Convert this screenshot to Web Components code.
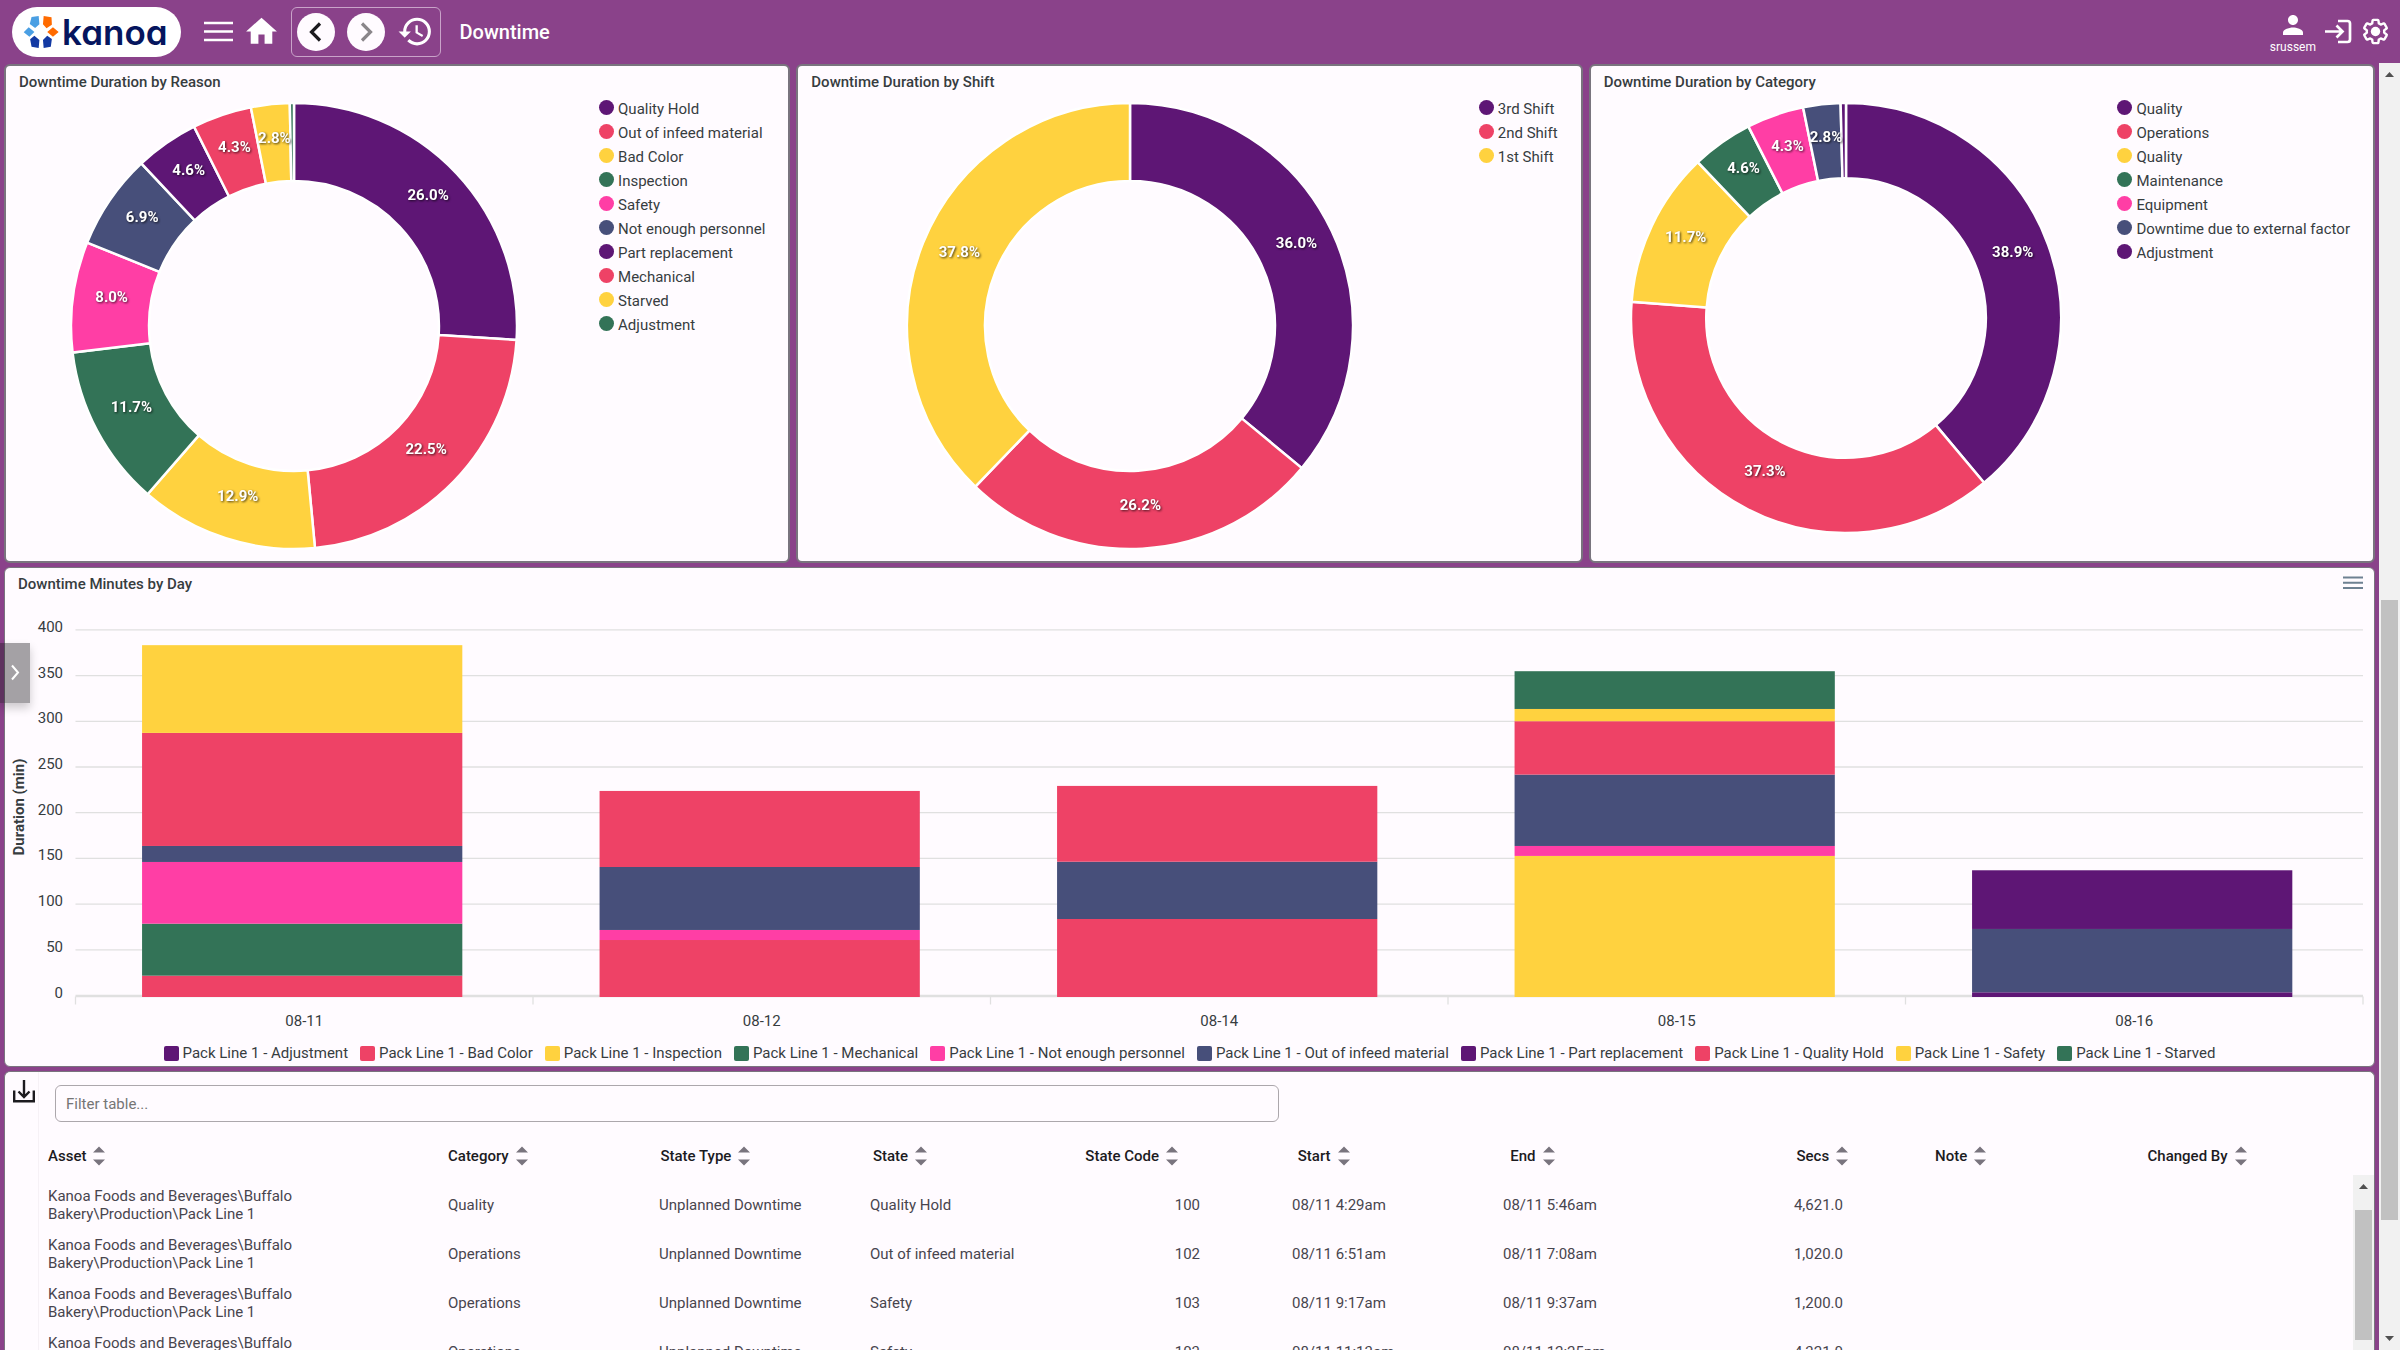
<!DOCTYPE html>
<html lang="en">
<head>
<meta charset="utf-8">
<title>Downtime</title>
<style>
  html, body { margin: 0; height: 100%; }
  body {
    --brand: #8a428a; --surface: #fffbff; --outline: #79747e; --ink: #373d3f;
    font-family: Roboto, "Liberation Sans", sans-serif; font-size: 15px; line-height: 18px;
    color: var(--ink); background: var(--brand); overflow: hidden;
  }
</style>
</head>
<body>
<downtime-app></downtime-app>

<script>
const COLORS = { purple: '#5e1675', red: '#ee4266', yellow: '#ffd23f', green: '#337357', pink: '#ff3ea5', blue: '#474f7a' };
const CYCLE = Object.values(COLORS);

class Base extends HTMLElement {
  mount(html) {
    if (!this.shadowRoot) this.attachShadow({ mode: 'open' });
    this.shadowRoot.innerHTML = html;
  }
}

class TopBar extends Base {
  connectedCallback() {
    this.mount(`
<style>
  :host { display: flex; align-items: center; height: 63px; padding: 0 10px 0 12px; box-sizing: border-box; color: #fff; }
  svg { display: block; }
  button, a { all: unset; cursor: pointer; display: flex; align-items: center; justify-content: center; }
  .logo { display: flex; align-items: center; gap: 3px; height: 50px; padding: 0 13px 0 11px; border-radius: 25px; background: #fff;
    font: 600 35px/44px Inter, sans-serif; font-feature-settings: "cv11"; color: #05155e; }
  .menu { margin-left: 23px; }
  .home { margin-left: 10px; }
  .history { display: flex; align-items: center; gap: 12px; margin-left: 11px; height: 48px; padding: 0 6px 0 5px; border: 1px solid #c9a3c9; border-radius: 6px; }
  .round { width: 38px; height: 38px; border-radius: 50%; background: var(--surface); color: #1c1b1f; }
  .round[disabled] { color: #8a868a; }
  h1 { margin: 0 auto 0 19px; font-size: 20px; line-height: 24px; font-weight: 500; }
  .right { display: flex; align-items: center; gap: 9px; }
  .user { flex-direction: column; font-size: 12px; line-height: 14px; }
</style>
<a class="logo" href="#">
  <svg width="36" height="32" viewBox="66 42 101 96" preserveAspectRatio="none" aria-hidden="true">
    <path fill="#4a9fe3" d="M90 45L110 42 112 67 100 78 85 66zM68 91L82 76 98 90 84 104z"/>
    <path fill="#ff6b00" d="M124 42L146 46 147 68 132 79 122 67zM134 90L150 76 166 90 150 104z"/>
    <path fill="#1239a3" d="M134 101L147 111 144 134 124 138 122 114zM98 101L112 114 110 138 90 134 86 112z"/>
  </svg><span>kanoa</span></a>
<button class="menu" aria-label="Menu"><svg width="29" height="21"><path d="M0 2h29M0 10.500h29M0 19h29" stroke="#fff" stroke-width="2.600"/></svg></button>
<a class="home" href="#" aria-label="Home"><svg width="37" height="37" viewBox="0 0 24 24" fill="#fff"><path d="M10 20v-6h4v6h5v-8h3L12 3 2 12h3v8z"/></svg></a>
<div class="history">
  <button class="round" aria-label="Back"><svg width="38" height="38" fill="none" stroke="currentColor" stroke-width="3.200"><path d="M23 10.500L14.500 19l8.500 8.500"/></svg></button>
  <button class="round" disabled aria-label="Forward"><svg width="38" height="38" fill="none" stroke="currentColor" stroke-width="3.200"><path d="M15 10.500l8.500 8.500-8.500 8.500"/></svg></button>
  <button aria-label="History"><svg width="37" height="37" viewBox="0 0 24 24" fill="#fff"><path d="M13 3a9 9 0 0 0-9 9H1l3.890 3.890.07.14L9 12H6c0-3.870 3.130-7 7-7s7 3.130 7 7-3.130 7-7 7c-1.930 0-3.680-.79-4.940-2.060l-1.420 1.420A8.950 8.950 0 0 0 13 21a9 9 0 0 0 0-18zm-1 5v5l4.280 2.540.72-1.210-3.500-2.080V8z"/></svg></button>
</div>
<h1>Downtime</h1>
<div class="right">
  <button class="user"><svg width="30" height="30" viewBox="0 0 24 24" fill="#fff"><path d="M12 12c2.210 0 4-1.790 4-4s-1.790-4-4-4-4 1.790-4 4 1.790 4 4 4zm0 2c-2.670 0-8 1.340-8 4v2h16v-2c0-2.660-5.330-4-8-4z"/></svg><span>srussem</span></button>
  <button aria-label="Log in"><svg width="27" height="25" fill="none" stroke="#fff" stroke-width="2.700"><path d="M13 2h9.500q2.500 0 2.500 2.500v16q0 2.500-2.500 2.500H13M0 12.500h17M11.500 6.500l6 6-6 6"/></svg></button>
  <button aria-label="Settings"><svg width="29" height="29" viewBox="0 0 24 24" fill="none" stroke="#fff" stroke-width="2" stroke-linejoin="round"><path d="M19.140 12.940c.04-.3.06-.61.06-.94 0-.32-.02-.64-.07-.94l2.030-1.580c.18-.14.23-.41.12-.61l-1.920-3.320c-.12-.22-.37-.29-.59-.22l-2.390.96c-.5-.38-1.030-.7-1.620-.94l-.36-2.540c-.04-.24-.24-.41-.48-.41h-3.840c-.24 0-.43.17-.47.41l-.36 2.540c-.59.24-1.130.57-1.620.94l-2.390-.96c-.22-.08-.47 0-.59.22L2.740 8.870c-.12.21-.08.47.12.61l2.030 1.580c-.05.3-.09.63-.09.94s.02.64.07.94l-2.030 1.580c-.18.14-.23.41-.12.61l1.920 3.320c.12.22.37.29.59.22l2.390-.96c.5.38 1.030.7 1.620.94l.36 2.540c.05.24.24.41.48.41h3.840c.24 0 .44-.17.47-.41l.36-2.540c.59-.24 1.130-.56 1.620-.94l2.390.96c.22.08.47 0 .59-.22l1.920-3.320c.12-.22.07-.47-.12-.61z"/><circle cx="12" cy="12" r="3.900" fill="#fff" stroke="none"/></svg></button>
</div>`);
  }
}

class DashCard extends Base {
  connectedCallback() {
    const heading = this.getAttribute('heading');
    this.mount(`
<style>
  :host { display: flex; flex-direction: column; box-sizing: border-box; min-width: 0; background: var(--surface);
    border: var(--card-border, 1px) solid var(--outline); border-radius: 6px; overflow: hidden; }
  header { display: flex; justify-content: space-between; padding: 7px 11px 0 13px; }
  h2 { margin: 0; font-size: 15px; line-height: 18px; font-weight: 500; }
</style>
${heading ? `<header><h2>${heading}</h2><slot name="action"></slot></header>` : ''}
<slot></slot>`);
  }
}

class ChartLegend extends Base {
  connectedCallback() {
    const names = this.getAttribute('items').split('|');
    this.mount(`
<style>
  :host { display: block; }
  ul { margin: 0; padding: 0; list-style: none; display: flex; flex-wrap: wrap; }
  li { display: flex; align-items: center; gap: 4px; line-height: 24px; white-space: nowrap; }
  i { width: 15px; height: 15px; border-radius: 2px; }
  :host([vertical]) ul { flex-direction: column; }
  :host([vertical]) i { border-radius: 50%; margin-bottom: 4px; }
  :host(:not([vertical])) ul { justify-content: center; column-gap: 12px; }
</style>
<ul>${names.map((n, k) => `<li><i style="background:${CYCLE[k % 6]}"></i>${n}</li>`).join('')}</ul>`);
  }
}

class DonutChart extends Base {
  connectedCallback() {
    this.mount(`
<style>
  :host { display: flex; min-height: 464px; padding-top: 6px; }
  .plot { flex: 1; min-width: 0; padding-top: 5px; display: flex; justify-content: center; }
  chart-legend { padding: 0 23px 0 17px; }
  svg { display: block; }
  text { font-size: 15px; font-weight: 700; fill: #fff; text-anchor: middle; filter: drop-shadow(1px 1px 1px rgba(0,0,0,.7)); }
</style>
<div class="plot"></div>
<chart-legend vertical items="${this.getAttribute('items')}"></chart-legend>`);
    this.plot = this.shadowRoot.querySelector('.plot');
    this.draw();
    new ResizeObserver(() => this.draw()).observe(this.plot);
  }
  draw() {
    const w = this.plot.clientWidth;
    if (!w || w === this.drawn) return;
    this.drawn = w;
    const R = Math.min(223, (w - 80) / 2), r = R * 0.65, c = R + 1, mid = (R + r) / 2;
    const values = this.getAttribute('values').split(',').map(Number);
    const total = values.reduce((a, b) => a + b, 0);
    const at = (rad, t) => `${(c + rad * Math.sin(t)).toFixed(2)} ${(c - rad * Math.cos(t)).toFixed(2)}`;
    let a = 0, arcs = '', labels = '';
    values.forEach((v, k) => {
      const b = a + v / total * 2 * Math.PI, big = b - a > Math.PI ? 1 : 0, m = (a + b) / 2;
      arcs += `<path fill="${CYCLE[k % 6]}" d="M${at(R, a)}A${R} ${R} 0 ${big} 1 ${at(R, b)}L${at(r, b)}A${r} ${r} 0 ${big} 0 ${at(r, a)}z"/>`;
      if (v > 1) labels += `<text x="${c + mid * Math.sin(m)}" y="${c - mid * Math.cos(m)}">${v.toFixed(1)}%</text>`;
      a = b;
    });
    this.plot.innerHTML = `<svg width="${2 * c}" height="${2 * c}"><g stroke="#fff" stroke-width="2.500">${arcs}</g>${labels}</svg>`;
  }
}

class BarChart extends Base {
  connectedCallback() {
    this.mount(`
<style>
  :host { display: block; padding-bottom: 1px; }
  .plot { height: 448px; }
  svg { display: block; }
  text { font-size: 15px; fill: var(--ink); text-anchor: middle; }
  .y { text-anchor: end; }
  .title { font-weight: 700; }
</style>
<div class="plot"></div>
<chart-legend items="Pack Line 1 - Adjustment|Pack Line 1 - Bad Color|Pack Line 1 - Inspection|Pack Line 1 - Mechanical|Pack Line 1 - Not enough personnel|Pack Line 1 - Out of infeed material|Pack Line 1 - Part replacement|Pack Line 1 - Quality Hold|Pack Line 1 - Safety|Pack Line 1 - Starved"></chart-legend>`);
    this.plot = this.shadowRoot.querySelector('.plot');
    this.draw();
    new ResizeObserver(() => this.draw()).observe(this.plot);
  }
  draw() {
    const w = this.plot.clientWidth;
    if (!w || w === this.drawn) return;
    this.drawn = w;
    // Each day lists the running total reached by every stacked segment.
    const days = [
      ['08-11', [['red', 21.7], ['green', 78.6], ['pink', 146.1], ['blue', 163.6], ['red', 287.3], ['yellow', 383.3]]],
      ['08-12', [['red', 60.7], ['pink', 71.7], ['blue', 140.6], ['red', 223.8]]],
      ['08-14', [['red', 83.7], ['blue', 146.4], ['red', 229.3]]],
      ['08-15', [['yellow', 152.7], ['pink', 163.6], ['blue', 241.7], ['red', 300.1], ['yellow', 313.5], ['green', 354.8]]],
      ['08-16', [['purple', 3.5], ['blue', 72.8], ['purple', 137]]],
    ];
    const x0 = 70.5, x1 = w - 11, zero = 402.5, k = 365.6 / 400, step = (x1 - x0) / days.length;
    const Y = v => zero - v * k;
    let grid = '', bars = '', text = '';
    for (let v = 0; v <= 400; v += 50) {
      grid += `<path d="M${x0} ${Y(v)}H${x1}"/>`;
      text += `<text class="y" x="58" y="${Y(v) + 2}">${v}</text>`;
    }
    grid += `<path d="M${x0} ${zero + 1.2}H${x1}"/>`;
    for (let i = 0; i <= days.length; i++) grid += `<path d="M${x0 + i * step} ${zero + 1}v8"/>`;
    days.forEach(([name, segs], i) => {
      let y = zero + 1.5;
      for (const [color, v] of segs) {
        bars += `<rect x="${x0 + (i + .1455) * step}" y="${Y(v)}" width="${step * .7}" height="${y - Y(v)}" fill="${COLORS[color]}"/>`;
        y = Y(v);
      }
      text += `<text x="${x0 + (i + .5) * step}" y="433">${name}</text>`;
    });
    this.plot.innerHTML = `<svg width="${w}" height="448"><g stroke="#e0e0e0" stroke-width="1.300">${grid}</g>${bars}${text}
      <text class="title" transform="translate(19 214) rotate(-90)">Duration (min)</text></svg>`;
  }
}

class ScrollTrack extends Base {
  connectedCallback() {
    this.mount(`
<style>
  :host { display: flex; flex-direction: column; align-items: center; width: 21px; background: #f1f1f1; }
  svg { flex: none; display: block; }
  .thumb { width: 17px; background: #c1c1c1; flex: 0 0 var(--size); margin-top: var(--start); }
  .end { margin-top: auto; }
</style>
<svg width="21" height="21"><path d="M6 14l4.500-5 4.500 5z" fill="#505050"/></svg>
<div class="thumb"></div>
${this.hasAttribute('end') ? '<svg class="end" width="21" height="21"><path d="M6 7l4.500 5 4.500-5z" fill="#505050"/></svg>' : ''}`);
  }
}

class DowntimeTable extends Base {
  connectedCallback() {
    const cols = ['Asset', 'Category', 'State Type', 'State', 'State Code', 'Start', 'End', 'Secs', 'Note', 'Changed By'];
    const asset = 'Kanoa Foods and Beverages\\Buffalo Bakery\\Production\\Pack Line 1';
    const rows = [
      ['Quality', 'Quality Hold', '100', '08/11 4:29am', '08/11 5:46am', '4,621.0'],
      ['Operations', 'Out of infeed material', '102', '08/11 6:51am', '08/11 7:08am', '1,020.0'],
      ['Operations', 'Safety', '103', '08/11 9:17am', '08/11 9:37am', '1,200.0'],
      ['Operations', 'Safety', '103', '08/11 11:13am', '08/11 12:25pm', '4,321.0'],
    ].map(([cat, state, code, start, end, secs]) => [asset, cat, 'Unplanned Downtime', state, code, start, end, secs, '', '']);
    this.mount(`
<style>
  :host { display: flex; flex: 1; min-height: 0; }
  button { all: unset; cursor: pointer; }
  svg { display: block; }
  .tools { width: 34px; box-sizing: border-box; padding: 8px 0 0 8px; border-right: 1px solid #f6f1f6; }
  .main { flex: 1; min-width: 0; display: flex; flex-direction: column; }
  input { flex: none; box-sizing: border-box; height: 37px; margin: 13px 16px 0; padding: 0 10px; max-width: 1224px;
    border: 1px solid #aca7ac; border-radius: 6px; background: none; font: inherit; color: #1c1b1f; }
  input::placeholder { color: #757575; opacity: 1; }
  .grid { flex: 1; min-height: 0; display: grid; grid-template-columns: 1fr 21px; grid-template-rows: auto 1fr; padding-top: 15px; }
  table { display: contents; }
  thead { grid-column: 1 / 3; display: block; padding: 0 14px 0 9px; }
  tbody { display: block; padding: 5px 6px 0 9px; overflow: hidden; min-height: 0; }
  tr { display: grid; grid-template-columns: 400px repeat(9, minmax(0, 1fr)); align-items: center; }
  thead tr { height: 38px; }
  tbody tr { height: 49px; }
  th, td { padding: 0; text-align: left; }
  th { font-weight: 500; color: #1c1b1f; }
  th button { display: flex; align-items: center; gap: 7px; }
  td { color: #48454e; }
  td:nth-child(5) { text-align: right; padding-right: 92px; }
  td:nth-child(8) { text-align: right; padding-right: 82px; }
  th:nth-child(8) { padding-right: 87px; }
  th:nth-child(8) button { margin-left: auto; }
</style>
<div class="tools"><button aria-label="Download"><svg width="22" height="24" fill="none" stroke="#1c1b1f" stroke-width="2.400"><path d="M11 0v17M5.500 11.500l5.500 5.500 5.500-5.500M1.200 10.500v10.800h19.600V10.500"/></svg></button></div>
<div class="main">
  <input type="text" placeholder="Filter table..." aria-label="Filter table">
  <div class="grid">
    <table>
      <thead><tr>${cols.map(c => `<th scope="col"><button>${c}<svg width="12" height="20" fill="#79747e"><path d="M0 6.500L6 .5l6 6zM0 13.500l6 6 6-6z"/></svg></button></th>`).join('')}</tr></thead>
      <tbody>${rows.map(r => `<tr>${r.map(v => `<td>${v}</td>`).join('')}</tr>`).join('')}</tbody>
    </table>
    <scroll-track style="--start: 14px; --size: 130px"></scroll-track>
  </div>
</div>`);
  }
}

class DowntimeApp extends Base {
  connectedCallback() {
    this.mount(`
<style>
  :host { display: flex; flex-direction: column; height: 100vh; position: relative; }
  .body { flex: 1; min-height: 0; display: flex; }
  main { flex: 1; min-width: 0; display: flex; flex-direction: column; gap: 4px; padding: 1px 4px 0; }
  .donuts { display: grid; grid-template-columns: repeat(3, minmax(0, 1fr)); gap: 6px; --card-border: 2px; }
  .donuts, .days { flex: none; }
  .rows { flex: 1; min-height: 0; border-bottom: 0; border-bottom-left-radius: 0; border-bottom-right-radius: 0; }
  button { all: unset; cursor: pointer; }
  svg { display: block; }
  .drawer { position: absolute; left: 0; top: calc(50% - 32px); width: 30px; height: 60px; background: rgba(28,27,31,.4); box-shadow: 0 5px 10px rgba(0,0,0,.2); }
</style>
<top-bar></top-bar>
<div class="body">
  <main>
    <div class="donuts">
      <dash-card heading="Downtime Duration by Reason"><donut-chart values="26,22.5,12.9,11.7,8,6.9,4.6,4.3,2.8,0.3" items="Quality Hold|Out of infeed material|Bad Color|Inspection|Safety|Not enough personnel|Part replacement|Mechanical|Starved|Adjustment"></donut-chart></dash-card>
      <dash-card heading="Downtime Duration by Shift"><donut-chart values="36,26.2,37.8" items="3rd Shift|2nd Shift|1st Shift"></donut-chart></dash-card>
      <dash-card heading="Downtime Duration by Category"><donut-chart values="38.9,37.3,11.7,4.6,4.3,2.8,0.4" items="Quality|Operations|Quality|Maintenance|Equipment|Downtime due to external factor|Adjustment"></donut-chart></dash-card>
    </div>
    <dash-card class="days" heading="Downtime Minutes by Day">
      <button slot="action" aria-label="Chart menu"><svg width="20" height="18"><path d="M0 2.500h20M0 7.800h20M0 13h20" stroke="#6e8192" stroke-width="2.100"/></svg></button>
      <bar-chart></bar-chart>
    </dash-card>
    <dash-card class="rows"><downtime-table></downtime-table></dash-card>
  </main>
  <scroll-track end style="--start: 516px; --size: 620px"></scroll-track>
</div>
<button class="drawer" aria-label="Open drawer"><svg width="30" height="60" fill="none" stroke="#fff" stroke-width="2"><path d="M12 22.500l6 7-6 7"/></svg></button>`);
  }
}

customElements.define('chart-legend', ChartLegend);
customElements.define('donut-chart', DonutChart);
customElements.define('bar-chart', BarChart);
customElements.define('scroll-track', ScrollTrack);
customElements.define('downtime-table', DowntimeTable);
customElements.define('dash-card', DashCard);
customElements.define('top-bar', TopBar);
customElements.define('downtime-app', DowntimeApp);
</script>
</body>
</html>
